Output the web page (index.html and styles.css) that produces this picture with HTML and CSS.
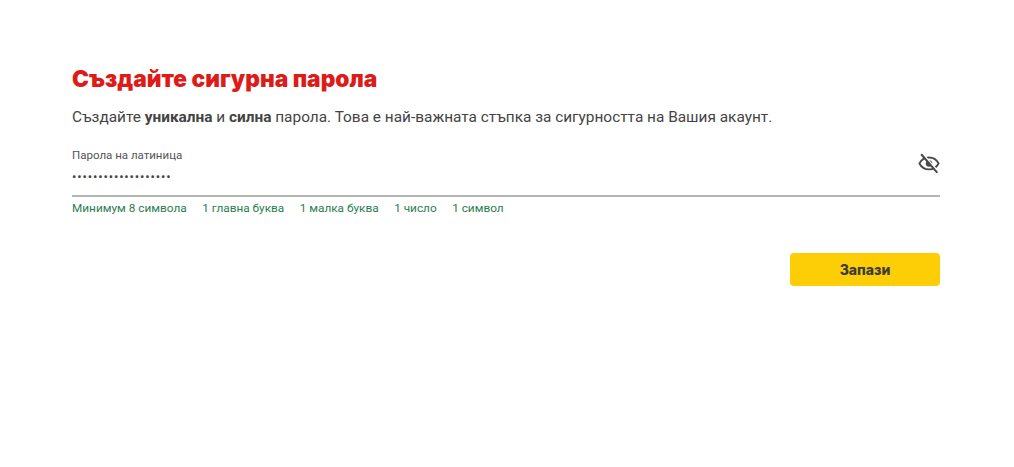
FILE: index.html
```html
<!DOCTYPE html>
<html lang="bg">
<head>
    <meta charset="UTF-8">
    <meta name="viewport" content="width=device-width, initial-scale=1.0">
    <title>Създайте сигурна парола</title>
    <link rel="stylesheet" href="styles.css">
</head>
<body>
    <div class="container">
        <h1>Създайте сигурна парола</h1>
        <p class="intro">Създайте <b>уникална</b> и <b>силна</b> парола. Това е най-важната стъпка за сигурността на Вашия акаунт.</p>
        <div class="field">
            <div class="field-text">
                <label for="password">Парола на латиница</label>
                <input type="password" id="password" value="abcdefghijklmnopqrs">
            </div>
            <svg class="eye" width="22" height="22" viewBox="0 0 24 24" fill="none" stroke="#4a4a4a" stroke-width="2" stroke-linecap="round" stroke-linejoin="round">
                <path d="M1.500 12.500C4 8 7.500 6 12 6s8 2 10.500 6.500C20 17 16.500 19 12 19S4 17 1.500 12.500z"/>
                <circle cx="12" cy="12.500" r="3.500" fill="#4a4a4a" stroke="none"/>
                <path d="M5.500 2.500l16.500 19" stroke="#fff" stroke-width="2"/>
                <path d="M4 3l16.500 19" stroke-width="2.200"/>
            </svg>
        </div>
        <ul class="rules">
            <li>Минимум 8 символа</li>
            <li>1 главна буква</li>
            <li>1 малка буква</li>
            <li>1 число</li>
            <li>1 символ</li>
        </ul>
        <div class="actions">
            <button>Запази</button>
        </div>
    </div>
</body>
</html>
```

FILE: styles.css
```css
body {
    font-family: 'Roboto', sans-serif;
    background-color: white;
    color: #444;
    margin: 0;
}
.container {
    width: 868px;
    margin-left: 72px;
    padding-top: 65px;
}
h1 {
    font-family: 'Inter', sans-serif;
    font-size: 22.7px;
    font-weight: 900;
    line-height: 28px;
    color: #dd1c1a;
    margin: 0 0 14px;
}
.intro {
    font-size: 15.4px;
    line-height: 20px;
    margin: 0 0 21px;
}
.intro b {
    font-weight: 700;
}
.field {
    display: flex;
    justify-content: space-between;
    align-items: flex-start;
    height: 47px;
    border-bottom: 2px solid #b5b5b5;
}
.field-text {
    display: flex;
    flex-direction: column;
}
label {
    font-size: 11.5px;
    line-height: 14px;
    color: #555;
}
input[type="password"] {
    border: none;
    outline: none;
    padding: 0;
    margin-top: 6px;
    width: 300px;
    height: 16px;
    font-family: 'Roboto', sans-serif;
    font-size: 13px;
    letter-spacing: 0.85px;
    color: #444;
}
.eye {
    margin-top: 4px;
}
.rules {
    display: flex;
    gap: 15.5px;
    list-style: none;
    font-size: 11.8px;
    line-height: 14px;
    color: #2b7d4f;
    margin: 4px 0 0;
    padding: 0;
}
.actions {
    display: flex;
    justify-content: flex-end;
    margin-top: 38px;
}
button {
    font-family: 'Inter', sans-serif;
    font-size: 14px;
    font-weight: 800;
    width: 150px;
    height: 33px;
    color: #3c3c3c;
    background-color: #fdcd05;
    border: none;
    border-radius: 4px;
    padding: 0;
}
```
